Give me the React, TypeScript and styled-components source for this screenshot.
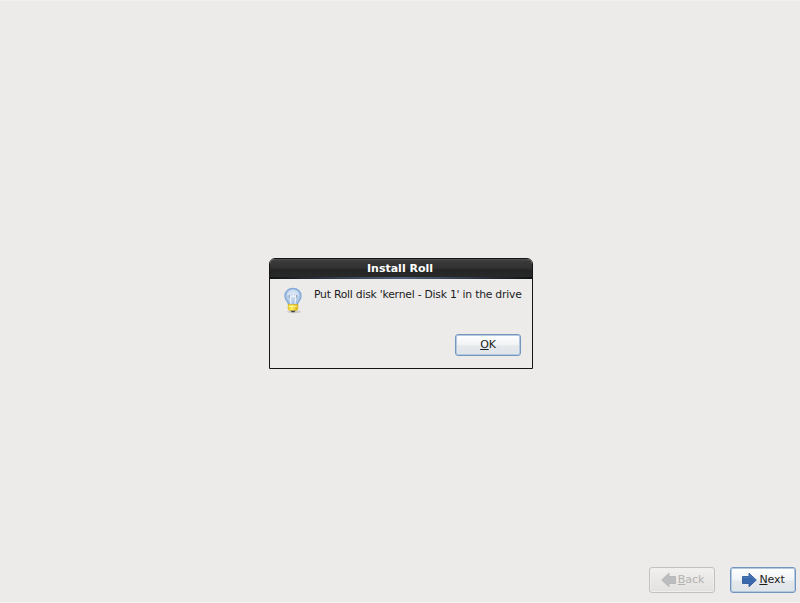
import React from "react";
import styled, { createGlobalStyle } from "styled-components";

const GlobalStyle = createGlobalStyle`
  * { box-sizing: border-box; }
  body { margin: 0; background: #edebea; }
`;

const Screen = styled.div`
  height: 603px;
  width: 800px;
  display: flex;
  flex-direction: column;
  background: #edebea;
  border-top: 1px solid #f1f0ee;
  border-bottom: 1px solid #f3f2f1;
  font-family: "DejaVu Sans", sans-serif;
  font-size: 10px;
  color: #1c1c1c;
  overflow: hidden;
`;

const Workspace = styled.main`
  flex: 1;
  padding: 257px 0 0 269px;
`;

const Dialog = styled.section`
  width: 264px;
  height: 111px;
  display: flex;
  flex-direction: column;
  border: 1px solid #151515;
  border-radius: 6px 6px 0 0;
  background: #edebea;
  overflow: hidden;
`;

const TitleBar = styled.header`
  height: 20px;
  flex: none;
  display: flex;
  align-items: center;
  justify-content: center;
  background: linear-gradient(#515151 0, #3a3a3a 2px, #313131 9px, #242424 11px, #28292a 100%);
  border-bottom: 2px solid;
  border-image: linear-gradient(90deg, #111 0, #3f4b5e 35%, #50607a 50%, #3f4b5e 65%, #111 100%) 2;
  color: #fff;
  font-weight: bold;
  font-size: 11px;
  line-height: 18px;
  padding: 2px 2px 0 0;
`;

const DialogContent = styled.div`
  display: flex;
  height: 55px;
  padding: 8px 0 0 14px;
`;

const Message = styled.p`
  margin: 1px 0 0 12px;
  font-size: 10.8px;
  letter-spacing: -0.23px;
  line-height: 13px;
  white-space: nowrap;
`;

const DialogActions = styled.div`
  display: flex;
  justify-content: flex-end;
  padding-right: 11px;
`;

const Footer = styled.footer`
  display: flex;
  justify-content: flex-end;
  gap: 15px;
  padding: 0 4px 9px 0;
`;

const Button = styled.button<{ $muted?: boolean }>`
  width: 66px;
  height: ${(p) => (p.$muted === undefined ? 22 : 26)}px;
  padding: 0 0 0 ${(p) => (p.$muted === undefined ? 0 : 1)}px;
  display: flex;
  align-items: center;
  justify-content: center;
  gap: 2px;
  border: 1px solid ${(p) => (p.$muted ? "#c2c1c0" : "#7396bf")};
  border-radius: 3px;
  background: ${(p) =>
    p.$muted
      ? "linear-gradient(#f1f0ef, #e9e8e7 50%, #e3e2e1)"
      : "linear-gradient(#ffffff, #f1f3f5 48%, #e5e9ec 55%, #dfe4e9)"};
  box-shadow: inset 0 0 0 1px ${(p) => (p.$muted ? "#efeeee" : "#b4c9e0")};
  color: ${(p) => (p.$muted ? "#b3b2b1" : "#1c1c1c")};
  font: inherit;
  font-size: 11px;
  letter-spacing: -0.1px;
`;

const Label = styled.span`
  padding-bottom: 2px;
  line-height: 13px;
`;

const Mnemonic = styled.span`
  text-decoration: underline;
  text-underline-offset: 1px;
  text-decoration-thickness: 1px;
`;

const Glyph = styled.svg`
  display: block;
  flex: none;
`;

function BulbIcon() {
  return (
    <Glyph width="18" height="27" viewBox="0 0 18 27">
      <defs>
        <radialGradient id="glass" cx=".5" cy=".45" r=".6">
          <stop offset="0" stopColor="#d6e2f0" />
          <stop offset=".6" stopColor="#b3cae7" />
          <stop offset="1" stopColor="#8aafdc" />
        </radialGradient>
        <linearGradient id="cap">
          <stop offset="0" stopColor="#f2d022" />
          <stop offset=".4" stopColor="#fff06a" />
          <stop offset="1" stopColor="#d9ae0c" />
        </linearGradient>
      </defs>
      <ellipse cx="10" cy="24.7" rx="7" ry="1.5" fill="#aaa9a7" opacity=".45" />
      <path d="M9 1.3C4.5 1.3.9 4.5.9 9c0 4 3.4 5.5 3.8 9h8.6c.4-3.5 3.8-5 3.8-9 0-4.5-3.6-7.7-8.1-7.7Z" fill="url(#glass)" stroke="#83a9d8" strokeWidth="1.2" />
      <path d="M3 9c0-3.8 2.5-6 6-6s6 2.2 6 6c-2.4-2-9-2.4-12 0Z" fill="#e5eef7" opacity=".55" />
      <path d="m7 17-1-8.5 2 1.3 1-1.3 1 1.3 2-1.3-1 8.5" fill="none" stroke="#eef3f8" strokeWidth="1.1" />
      <path d="M5.4 8v2.7M12.6 8v2.7" stroke="#8ba0b9" />
      <path d="M4.2 17.5h9.6v4.2c0 1.3-1.5 1.9-2.9 1.9H7.1c-1.4 0-2.9-.6-2.9-1.9Z" fill="url(#cap)" stroke="#dab81b" strokeWidth=".7" />
      <path d="M5 19.5h8" stroke="#fff8af" strokeWidth=".7" />
      <path d="M6.5 23.7h5l-1.2 1.5H7.7Z" fill="#444" />
    </Glyph>
  );
}

function ArrowIcon({ back = false }: { back?: boolean }) {
  return (
    <Glyph width="15" height="16" viewBox="0 0 15 16">
      <path
        d={back ? "M14.5 4.5H8V1.2L.7 8 8 14.8v-3.3h6.5Z" : "M.5 4.5H7V1.2L14.3 8 7 14.8v-3.3H.5Z"}
        fill={back ? "#bbbdbe" : "#3768ae"}
        stroke={back ? "#b0b2b3" : "#24508f"}
        strokeWidth=".8"
      />
      {!back && <path d="M1.4 5.4h6.4V3.2L12.7 8" fill="none" stroke="#5481bf" strokeWidth=".8" />}
    </Glyph>
  );
}

export default function App() {
  return (
    <>
      <GlobalStyle />
      <Screen>
        <Workspace>
          <Dialog role="dialog" aria-label="Install Roll">
            <TitleBar>Install Roll</TitleBar>
            <DialogContent>
              <BulbIcon />
              <Message>Put Roll disk 'kernel - Disk 1' in the drive</Message>
            </DialogContent>
            <DialogActions>
              <Button><Label><Mnemonic>O</Mnemonic>K</Label></Button>
            </DialogActions>
          </Dialog>
        </Workspace>
        <Footer>
          <Button $muted disabled><ArrowIcon back /><Label><Mnemonic>B</Mnemonic>ack</Label></Button>
          <Button $muted={false}><ArrowIcon /><Label><Mnemonic>N</Mnemonic>ext</Label></Button>
        </Footer>
      </Screen>
    </>
  );
}
